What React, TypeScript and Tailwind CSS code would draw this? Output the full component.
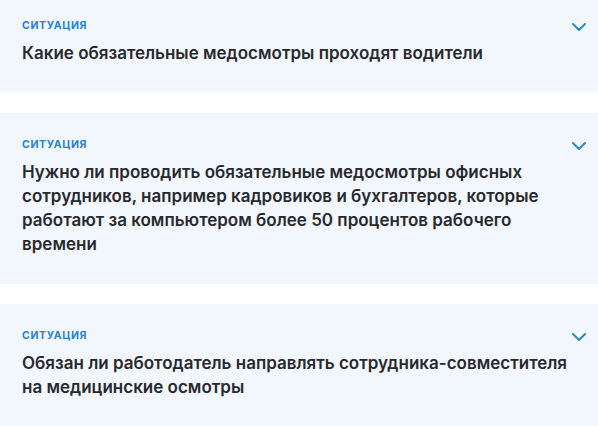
const items = [
  { title: "Какие обязательные медосмотры проходят водители", first: true },
  {
    title:
      "Нужно ли проводить обязательные медосмотры офисных сотрудников, например кадровиков и бухгалтеров, которые работают за компьютером более 50 процентов рабочего времени",
  },
  {
    title:
      "Обязан ли работодатель направлять сотрудника-совместителя на медицинские осмотры",
  },
];

function Chevron() {
  return (
    <svg width="14" height="8" viewBox="0 0 14 8" fill="none" className="shrink-0">
      <path
        d="M1 1l6 6 6-6"
        stroke="#2a8ac2"
        strokeWidth="2"
        strokeLinecap="round"
        strokeLinejoin="round"
      />
    </svg>
  );
}

function SituationCard({ title, first }: { title: string; first?: boolean }) {
  return (
    <div
      className={`flex items-start bg-[#f2f7fd] pl-[22px] pr-[12px] pb-[28px] ${
        first ? "pt-[18px]" : "pt-[24px]"
      }`}
    >
      <div className="min-w-0 flex-1">
        <div className="text-[10.5px] font-bold uppercase leading-4 tracking-[0.06em] text-[#2b7fd6]">
          Ситуация
        </div>
        <div className="mt-[7px] text-[17px] font-semibold leading-6 text-[#29292d]">
          {title}
        </div>
      </div>
      <div className="mt-[5px]">
        <Chevron />
      </div>
    </div>
  );
}

export default function App() {
  return (
    <div
      className="flex h-[426px] w-[598px] flex-col gap-[20px] overflow-hidden bg-white"
      style={{ fontFamily: "Inter, 'Noto Sans', sans-serif" }}
    >
      {items.map((item, i) => (
        <SituationCard key={i} title={item.title} first={item.first} />
      ))}
    </div>
  );
}
